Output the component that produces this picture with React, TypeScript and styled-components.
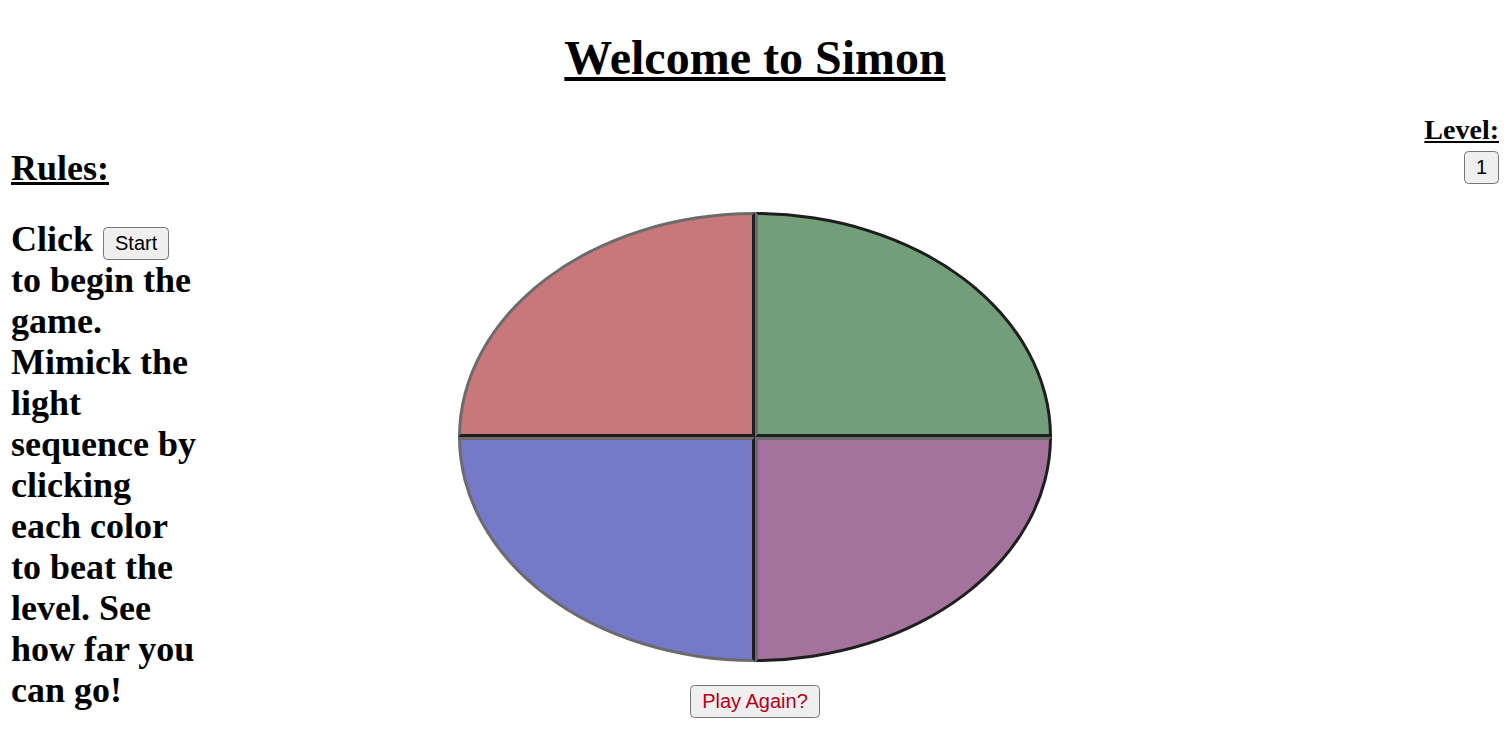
import React from "react";
import styled, { createGlobalStyle } from "styled-components";

const GlobalStyle = createGlobalStyle`
  body {
    margin: 0;
    padding: 0 12px 0 11px;
    background: #fff;
    color: #000;
    font-family: "Liberation Serif", "Times New Roman", serif;
  }
`;

// Layout
const Title = styled.h1`
  margin: 30px 0 29px;
  font-size: 48px;
  font-weight: bold;
  text-align: center;
  text-decoration: underline;
`;

const Main = styled.div`
  display: grid;
  grid-template-columns: 1fr auto 1fr;
  align-items: start;
`;

const RulesColumn = styled.div`
  width: 195px;
`;

const Heading = styled.h2`
  margin: 33px 0 30px;
  font-size: 36px;
  font-weight: bold;
  text-decoration: underline;
`;

const RulesText = styled.h2`
  margin: 0;
  font-size: 36px;
  line-height: 41px;
  font-weight: bold;
`;

const BoardColumn = styled.div`
  display: flex;
  flex-direction: column;
  align-items: center;
  padding-top: 98px;
`;

const LevelColumn = styled.div`
  display: flex;
  flex-direction: column;
  align-items: flex-end;
`;

const LevelHeading = styled.h3`
  margin: 0 0 5px;
  font-size: 28px;
  font-weight: bold;
  text-decoration: underline;
`;

const Button = styled.button<{ $danger?: boolean }>`
  font-family: Arial, "Liberation Sans", sans-serif;
  font-size: 20px;
  line-height: 23px;
  padding: 4px 11px;
  border: 1.5px solid #767676;
  border-radius: 4.5px;
  background: #efefef;
  color: ${(p) => (p.$danger ? "#b3001b" : "#000")};
  vertical-align: middle;
  cursor: pointer;
`;

const InlineButton = styled(Button)`
  position: relative;
  top: 1px;
  margin-left: 1px;
`;

// Board
const Board = styled.div`
  display: grid;
  grid-template-columns: 297px 297px;
  grid-template-rows: 225px 225px;
`;

type Corner = "tl" | "tr" | "bl" | "br";

const LIGHT = "#6b6b6b";
const DARK = "#1e1e1e";

const edges: Record<Corner, string> = {
  tl: `border-color: ${LIGHT} ${DARK} ${DARK} ${LIGHT}; border-top-left-radius: 100% 100%;`,
  tr: `border-color: ${DARK} ${DARK} ${DARK} ${LIGHT}; border-top-right-radius: 100% 100%;`,
  bl: `border-color: ${LIGHT} ${DARK} ${LIGHT} ${LIGHT}; border-bottom-left-radius: 100% 100%;`,
  br: `border-color: ${LIGHT} ${DARK} ${DARK} ${LIGHT}; border-bottom-right-radius: 100% 100%;`,
};

const Quadrant = styled.div<{ $color: string; $corner: Corner }>`
  box-sizing: border-box;
  border: 3px solid;
  background: ${(p) => p.$color};
  ${(p) => edges[p.$corner]}
  cursor: pointer;
`;

const PlayAgain = styled(Button)`
  margin-top: 23px;
`;

const quadrants: { color: string; corner: Corner }[] = [
  { color: "#c8777a", corner: "tl" },
  { color: "#729f7a", corner: "tr" },
  { color: "#7678c8", corner: "bl" },
  { color: "#a4739d", corner: "br" },
];

export default function App() {
  return (
    <>
      <GlobalStyle />
      <Title>Welcome to Simon</Title>
      <Main>
        <RulesColumn>
          <Heading>Rules:</Heading>
          <RulesText>
            Click <InlineButton>Start</InlineButton> to begin the game. Mimick
            the light sequence by clicking each color to beat the level. See
            how far you can go!
          </RulesText>
        </RulesColumn>
        <BoardColumn>
          <Board>
            {quadrants.map((q) => (
              <Quadrant key={q.corner} $color={q.color} $corner={q.corner} />
            ))}
          </Board>
          <PlayAgain $danger>Play Again?</PlayAgain>
        </BoardColumn>
        <LevelColumn>
          <LevelHeading>Level:</LevelHeading>
          <Button>1</Button>
        </LevelColumn>
      </Main>
    </>
  );
}
